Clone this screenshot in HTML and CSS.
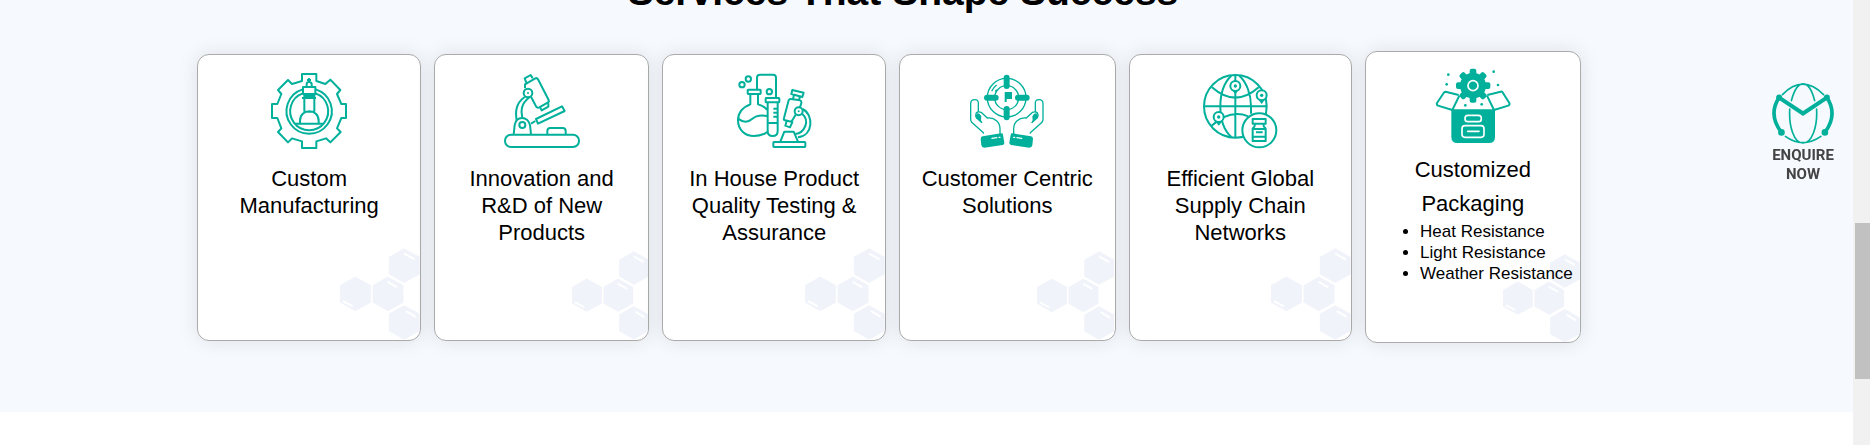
FILE: index.html
```html
<!DOCTYPE html>
<html lang="en">
<head>
<meta charset="utf-8">
<title>Services That Shape Success</title>
<link rel="stylesheet" href="styles.css">
</head>
<body>
<svg class="defs" aria-hidden="true">
  <symbol id="cells" viewBox="480 620 240 276">
    <g fill="#f0f3f9">
      <path id="hex" d="M526 706L573 732V784L526 810L480 784V732Z"/>
      <use href="#hex" x="98"/>
      <use href="#hex" x="147" y="-85"/>
      <use href="#hex" x="147" y="86"/>
    </g>
    <path d="M491 781L516 794M625 723L650 737M675 638L702 653M680 811L705 826" stroke="#fff" stroke-width="6" stroke-linecap="round"/>
  </symbol>
</svg>
<div class="page">
  <main class="content">
    <section class="services">
      <h2 class="services-title">Services That Shape Success</h2>
      <div class="cards">
        <article class="card">
          <svg class="card-icon" viewBox="273 96 228 228" aria-hidden="true">
            <g class="line">
              <path d="M366 99H409V120L436 129L451 116L481 147L471 159L484 189H498V231H484L471 262L482 273L451 304L438 292L409 301V321H366V301L336 292L324 304L294 273L304 262L292 231H276V189H292L304 159L294 147L324 117L336 129L366 120Z"/>
              <path d="M368 145A68 68 0 1 0 407 145M368 157A57 57 0 1 0 407 157"/>
              <path d="M369 138H406V159H369ZM373 165H403M366 171H408M373 159V212M403 159V212M373 212H403M346 248H430M360 248V240C360 221 373 211 388 211S416 221 416 240V248"/>
              <path d="M380 137V129Q380 123 387 123T395 129V137M387 111V121M381 117H393"/>
            </g>
          </svg>
          <h3 class="card-title">Custom Manufacturing</h3>
          <svg class="cells" aria-hidden="true"><use href="#cells"/></svg>
        </article>
        <article class="card">
          <svg class="card-icon" viewBox="252 96 228 228" aria-hidden="true">
            <g class="line">
              <rect x="255" y="281" width="222" height="37" rx="18"/>
              <path d="M382 280V270Q382 261 391 261H428Q437 261 437 270V280"/>
              <path d="M281 280L284 252Q288 231 306 231T330 252L333 280"/>
              <circle cx="307" cy="252" r="9"/>
              <circle cx="324" cy="156" r="13"/>
              <path d="M314 168C286 188 286 214 290 239M328 169C302 190 302 210 307 230"/>
              <path d="M315 142V130L346 112Q351 110 354 115L386 177Q388 182 383 185L358 199Q352 202 348 196L333 167M319 125L314 112L332 102L338 112M361 201L365 208L385 197V187M333 248L346 240"/>
              <path d="M348 234L426 196L434 210L354 248Z"/>
            </g>
            <circle cx="324" cy="156" r="3" fill="#00b09b"/>
          </svg>
          <h3 class="card-title">Innovation and R&amp;D of New Products</h3>
          <svg class="cells" aria-hidden="true"><use href="#cells"/></svg>
        </article>
        <article class="card">
          <svg class="card-icon" viewBox="261 96 228 228" aria-hidden="true">
            <g class="line">
              <circle cx="298" cy="114" r="8"/><circle cx="279" cy="131" r="8"/><circle cx="361" cy="152" r="8"/>
              <path d="M324 144V110Q324 101 333 101H372Q381 101 381 110V169"/>
              <rect x="296" y="146" width="39" height="13" rx="2"/>
              <path d="M304 160V190C280 199 267 216 267 238C267 266 288 285 315 285Q340 285 356 272M327 160V190Q347 196 355 207M267 233C280 243 296 246 309 234S340 222 355 225"/>
              <rect x="350" y="171" width="41" height="13" rx="2"/>
              <path d="M356 185V270Q356 285 371 285T386 270V185M357 246H386M386 203H373M386 215H373M386 227H373"/>
              <rect x="373" y="303" width="96" height="15" rx="2"/>
              <path d="M394 302L406 272H434L447 302"/>
              <circle cx="449" cy="211" r="12"/>
              <path d="M461 204C494 220 494 284 447 289M460 219C484 240 466 276 439 279M440 221L430 238Q427 243 421 241L408 238Q403 236 405 231L419 178Q421 173 426 174L453 178Q458 180 457 186L453 199M413 240L409 254L423 259L431 241M432 173L435 162M450 176L453 167"/>
              <path d="M430 147L464 155L460 168L427 159Z"/>
            </g>
            <circle cx="449" cy="211" r="3" fill="#00b09b"/>
          </svg>
          <h3 class="card-title">In House Product Quality Testing &amp; Assurance</h3>
          <svg class="cells" aria-hidden="true"><use href="#cells"/></svg>
        </article>
        <article class="card">
          <svg class="card-icon" viewBox="268 96 228 228" aria-hidden="true">
            <g class="line thin">
              <circle cx="381" cy="170" r="58"/><circle cx="381" cy="170" r="36"/>
              <path d="M336 151Q341 139 351 132M347 152L351 146" />
              <path id="hand" d="M312 276L276 244Q273 240 273 234V188Q273 176 285 176T296 188V211M311 275V278M289 220C288 213 298 210 306 215L323 231C346 228 361 245 361 263V280M289 218Q286 225 291 231L307 245"/>
              <use href="#hand" transform="matrix(-1 0 0 1 763 0)"/>
            </g>
            <g class="solid">
              <rect x="372" y="101" width="18" height="43" rx="9"/><rect x="372" y="195" width="18" height="43" rx="9"/>
              <rect x="313" y="161" width="44" height="18" rx="9"/><rect x="406" y="161" width="44" height="18" rx="9"/>
              <path d="M375 153H397V174H381V183H375Z"/>
              <path id="palm" d="M289 222Q292 213 300 219L305 226Q302 235 308 247L290 232Q286 227 289 222Z"/>
              <use href="#palm" transform="matrix(-1 0 0 1 763 0)"/>
              <path id="cuff" d="M309 286L364 277Q369 276 370 281L374 305Q375 310 369 312L314 320Q306 320 305 313L303 294Q303 287 309 286Z"/>
              <use href="#cuff" transform="matrix(-1 0 0 1 763 0)"/>
            </g>
            <path d="M337 292L351 290M358 289H361M426 292L412 290M405 289H402" stroke="#fff" stroke-width="4" stroke-linecap="round"/>
          </svg>
          <h3 class="card-title">Customer Centric Solutions</h3>
          <svg class="cells" aria-hidden="true"><use href="#cells"/></svg>
        </article>
        <article class="card">
          <svg class="card-icon" viewBox="276 96 228 228" aria-hidden="true">
            <g class="line">
              <circle cx="376" cy="196" r="94"/>
              <path d="M376 102V290M282 196H470M364 104C320 145 320 248 364 288M388 104C410 124 423 160 423 196V218M306 139Q376 201 446 139M305 254Q360 204 415 226"/>
            </g>
            <g class="line filled">
              <circle cx="376" cy="135" r="15"/>
              <circle cx="326" cy="228" r="15"/>
              <circle cx="455" cy="163" r="15"/>
              <circle cx="448" cy="268" r="51"/>
              <path d="M428 234H467V248H428ZM435 249Q435 258 428 263V300H467V263Q460 258 460 249M429 264H466M429 287H466M438 274H458" />
            </g>
            <g class="solid">
              <circle cx="376" cy="135" r="5"/><circle cx="326" cy="228" r="5"/><circle cx="455" cy="163" r="5"/>
              <path d="M368 149H384L376 160ZM317 242H336L326 254ZM446 177H464L455 189Z"/>
            </g>
          </svg>
          <h3 class="card-title">Efficient Global Supply Chain Networks</h3>
          <svg class="cells" aria-hidden="true"><use href="#cells"/></svg>
        </article>
        <article class="card card-tall">
          <svg class="card-icon" viewBox="255 82 228 228" aria-hidden="true">
            <g class="solid">
              <path d="M304 206H435V289Q435 307 417 307H322Q304 307 304 289Z"/>
              <circle cx="369" cy="135" r="39"/>
              <g id="teeth"><rect x="359" y="84" width="20" height="102" rx="6"/><rect x="318" y="125" width="103" height="20" rx="6"/></g>
              <use href="#teeth" transform="rotate(45 369 135)"/>
              <circle cx="295" cy="102" r="4"/><circle cx="290" cy="131" r="4"/><circle cx="431" cy="93" r="4"/><circle cx="444" cy="133" r="4"/><circle cx="346" cy="194" r="4"/><circle cx="395" cy="191" r="4"/>
            </g>
            <g class="line">
              <path d="M326 163L287 153Q283 153 281 157L261 187Q259 192 264 195L307 208L328 165M412 163L452 153Q457 152 459 157L478 187Q480 192 475 195L432 208L411 165"/>
            </g>
            <g fill="none" stroke="#fff" stroke-width="5">
              <circle cx="369" cy="135" r="15"/><rect x="345" y="224" width="49" height="19" rx="9"/><rect x="336" y="255" width="66" height="35" rx="9"/><path d="M353 272H387" stroke-linecap="round"/>
            </g>
          </svg>
          <h3 class="card-title">Customized Packaging</h3>
          <svg class="cells" aria-hidden="true"><use href="#cells"/></svg>
          <ul class="card-list">
            <li>Heat Resistance</li>
            <li>Light Resistance</li>
            <li>Weather Resistance</li>
          </ul>
        </article>
      </div>
    </section>
  </main>
  <div class="scrollbar" aria-hidden="true"><div class="scrollbar-thumb"></div></div>
</div>
<a class="enquire" href="#enquire">
  <svg class="enquire-logo" viewBox="96 68 186 184" aria-hidden="true">
    <g fill="none" stroke="#00b09b" stroke-linecap="round">
      <path stroke-width="5" d="M127 103Q188 40 251 103M136 229Q188 267 243 229M154 121C172 54 207 54 224 121M149 147C146 200 162 249 189 249S233 200 230 147"/>
      <path stroke-width="12" stroke-linejoin="miter" d="M117 112L189 160L261 112"/>
      <path stroke-width="11" d="M117 112C96 144 96 181 124 217M261 112C282 144 282 181 255 217"/>
    </g>
    <g class="solid"><circle cx="117" cy="112" r="9"/><circle cx="261" cy="112" r="9"/><circle cx="124" cy="217" r="10"/><circle cx="255" cy="217" r="10"/></g>
  </svg>
  <span>ENQUIRE<br>NOW</span>
</a>
</body>
</html>
```
FILE: styles.css
```css
* {
  box-sizing: border-box;
}

body {
  margin: 0;
  background: #fff;
  color: #000;
  font-family: "Liberation Sans", Arial, sans-serif;
  overflow: hidden;
}

.defs {
  position: absolute;
  width: 0;
  height: 0;
}

.page {
  display: flex;
  min-height: 100vh;
}

.content {
  flex: 1;
  min-width: 0;
}

.services {
  background: #f6f9fe;
  padding: 0 14.7% 69px 10.65%;
}

.services-title {
  margin: -32px 0 35px 28px;
  color: #000;
  font-size: 39px;
  line-height: 48px;
  text-align: center;
}

.cards {
  display: grid;
  grid-template-columns: 224fr 216fr 224fr 217fr 224fr 216fr;
  gap: 13px;
  align-items: center;
}

.card {
  position: relative;
  display: flex;
  flex-direction: column;
  align-items: center;
  min-height: 287px;
  padding: 18px 12px;
  border: 1px solid #aaa;
  border-radius: 12px;
  background: #fff;
  box-shadow: 0 0 20px rgba(0, 0, 0, 0.1);
  overflow: hidden;
}

.card-icon {
  width: 76px;
  height: 76px;
}

.card-title {
  margin: 16px 0 0;
  font-size: 22px;
  font-weight: 400;
  line-height: 27px;
  text-align: center;
}

.cells {
  position: absolute;
  right: 0;
  bottom: 0;
  width: 36%;
  height: auto;
  aspect-ratio: 240 / 276;
}

.card-tall {
  min-height: 292px;
  padding: 16px 0;
}

.card-tall .card-title {
  width: 160px;
  margin-top: 9px;
  line-height: 34px;
}

.card-list {
  position: relative;
  align-self: stretch;
  margin: 0;
  padding-left: 54px;
  font-size: 17px;
  line-height: 21px;
  white-space: nowrap;
}

.line {
  fill: none;
  stroke: #00b09b;
  stroke-width: 6;
  stroke-linejoin: round;
}

.thin {
  stroke-width: 4;
}

.filled {
  fill: #fff;
}

.solid {
  fill: #00b09b;
}

.scrollbar {
  width: 17px;
  padding: 223px 0 0 2px;
  background: #f1f1f1;
}

.scrollbar-thumb {
  height: 156px;
  background: #c1c1c1;
}

.enquire {
  position: fixed;
  top: 83px;
  right: 36px;
  display: flex;
  flex-direction: column;
  align-items: center;
  gap: 2px;
  color: #444;
  font: 700 15px/19px Roboto, sans-serif;
  text-align: center;
  text-decoration: none;
}

.enquire-logo {
  width: 62px;
  height: 61px;
}
```
